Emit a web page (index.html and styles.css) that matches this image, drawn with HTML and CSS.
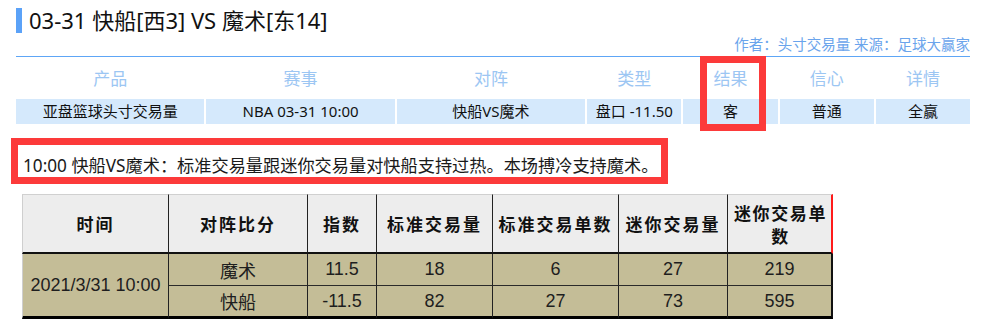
FILE: index.html
```html
<!DOCTYPE html>
<html lang="zh-CN">
<head>
<meta charset="utf-8">
<title>03-31 快船 VS 魔术</title>
<link rel="stylesheet" href="styles.css">
</head>
<body>
<div class="page">
  <h1 class="title">03-31 快船[西3] VS 魔术[东14]</h1>
  <div class="meta">作者：头寸交易量 来源：足球大赢家</div>
  <div class="summary">
    <div class="grid head">
      <div>产品</div><div>赛事</div><div>对阵</div><div>类型</div><div>结果</div><div>信心</div><div>详情</div>
    </div>
    <div class="grid row">
      <div>亚盘篮球头寸交易量</div><div>NBA 03-31 10:00</div><div>快船VS魔术</div><div>盘口 -11.50</div><div>客</div><div>普通</div><div>全赢</div>
    </div>
    <div class="mark"></div>
  </div>
  <p class="note">10:00 快船VS魔术：标准交易量跟迷你交易量对快船支持过热。本场搏冷支持魔术。</p>
  <table class="stats">
    <thead>
      <tr>
        <th class="c1">时间</th>
        <th class="c2">对阵比分</th>
        <th class="c3">指数</th>
        <th class="c4">标准交易量</th>
        <th class="c5">标准交易单数</th>
        <th class="c6">迷你交易量</th>
        <th class="c7">迷你交易单数</th>
      </tr>
    </thead>
    <tbody>
      <tr class="r1">
        <td class="c1" rowspan="2">2021/3/31 10:00</td>
        <td>魔术</td><td>11.5</td><td>18</td><td>6</td><td>27</td><td class="c7">219</td>
      </tr>
      <tr class="r2">
        <td>快船</td><td>-11.5</td><td>82</td><td>27</td><td>73</td><td class="c7">595</td>
      </tr>
    </tbody>
  </table>
</div>
</body>
</html>
```
FILE: styles.css
```css
html, body {
  margin: 0;
  padding: 0;
  background: #fff;
}
body {
  font-family: "Noto Sans", "Noto Sans CJK SC", sans-serif;
  color: #111;
}
.page {
  width: 954px;
  padding: 8px 0 0 16px;
}
.title {
  margin: 0;
  height: 25px;
  line-height: 25px;
  border-left: 6px solid #5ba2f8;
  padding-left: 7px;
  font-size: 22px;
  font-weight: normal;
  color: #111;
}
.meta {
  text-align: right;
  font-size: 14.5px;
  line-height: 18px;
  padding: 2px 0 3px;
  color: #6aa4ec;
  border-bottom: 1px solid #5ea6f6;
}
.summary {
  position: relative;
  padding-top: 6px;
}
.grid {
  display: grid;
  grid-template-columns: 2fr 2fr 2fr 1fr 1fr 1fr 1fr;
  column-gap: 2px;
  text-align: center;
}
.head {
  height: 32px;
  line-height: 32px;
  font-size: 17px;
  color: #9cc6f3;
}
.row {
  margin-top: 4px;
  height: 25px;
  line-height: 25px;
  font-size: 15px;
  color: #111;
}
.row > div {
  background: #d5e9fc;
}
.mark {
  position: absolute;
  left: 684px;
  top: -1px;
  width: 66px;
  height: 75px;
  box-sizing: border-box;
  border: 7px solid #fc3a3a;
}
.note {
  margin: 14px 0 0 -5px;
  width: 657px;
  box-sizing: border-box;
  border: 7px solid #fc3a3a;
  padding: 10px 0 1px 5px;
  font-size: 17.2px;
  line-height: 21px;
  color: #1a1a1a;
  white-space: nowrap;
}
.stats {
  margin: 10px 0 0 6px;
  border-collapse: separate;
  border-spacing: 0;
  table-layout: fixed;
  width: 811px;
  text-align: center;
}
.stats th, .stats td {
  box-sizing: border-box;
  padding: 0;
  border-left: 1px solid #222;
}
.stats th {
  height: 60px;
  background: #ededed;
  border-top: 1px solid #d0d0d0;
  border-bottom: 2px solid #111;
  font-family: "Noto Sans CJK SC", sans-serif;
  font-weight: bold;
  font-size: 17px;
  letter-spacing: 2px;
  line-height: 23px;
  color: #111;
}
.stats .c1 { width: 146px; border-left-color: #cfcfcf; }
.stats .c2 { width: 139px; }
.stats .c3 { width: 69px; }
.stats .c4 { width: 116px; }
.stats .c5 { width: 126px; }
.stats .c6 { width: 109px; }
.stats .c7 { border-right: 2px solid #111; }
.stats th.c7 {
  border-right-color: #ff1a1a;
  padding: 0 0 0 2px;
  letter-spacing: 1.6px;
}
.stats td {
  background: #c4bd97;
  font-family: "Liberation Sans", "Noto Sans CJK SC", sans-serif;
  font-size: 18px;
  color: #1e1e1e;
}
.stats .r1 td {
  height: 32px;
  border-bottom: 1px solid #2a2a2a;
}
.stats .r2 td {
  height: 33px;
  border-bottom: 3px solid #000;
}
.stats .r1 td.c1 {
  border-bottom: 3px solid #000;
}
```
